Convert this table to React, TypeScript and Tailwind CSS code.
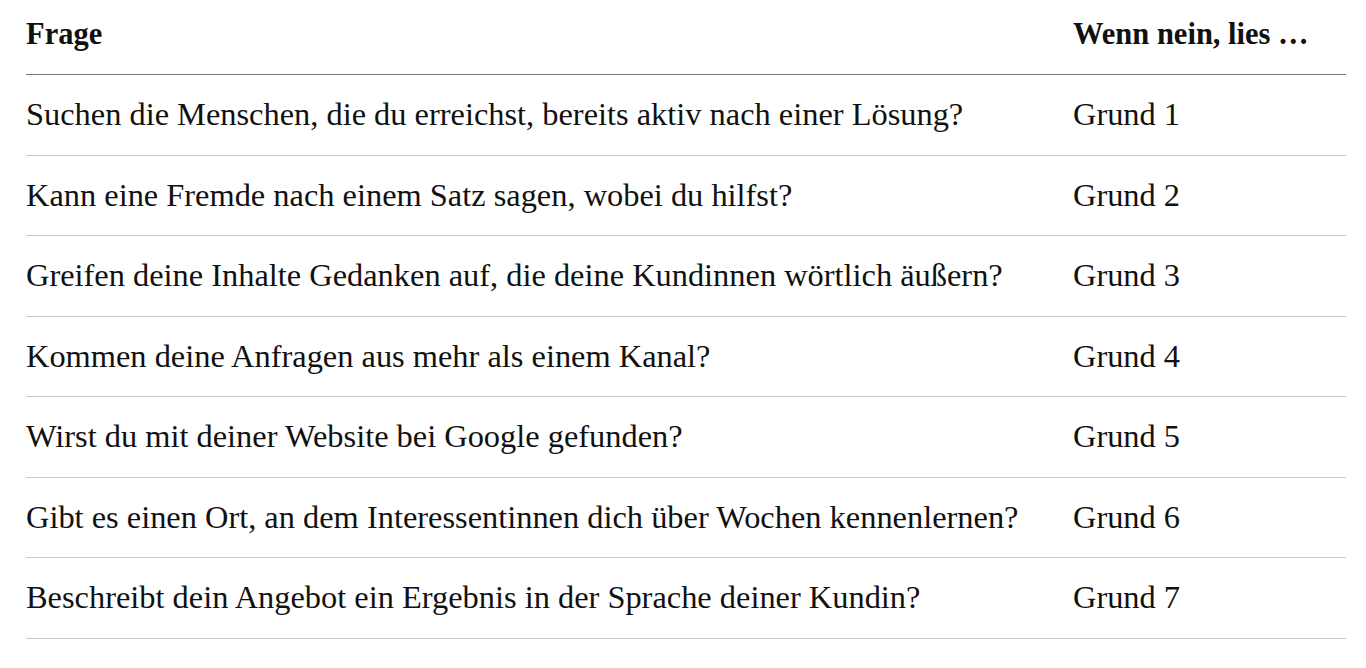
import React from "react";

const rows: [string, string][] = [
  ["Suchen die Menschen, die du erreichst, bereits aktiv nach einer Lösung?", "Grund 1"],
  ["Kann eine Fremde nach einem Satz sagen, wobei du hilfst?", "Grund 2"],
  ["Greifen deine Inhalte Gedanken auf, die deine Kundinnen wörtlich äußern?", "Grund 3"],
  ["Kommen deine Anfragen aus mehr als einem Kanal?", "Grund 4"],
  ["Wirst du mit deiner Website bei Google gefunden?", "Grund 5"],
  ["Gibt es einen Ort, an dem Interessentinnen dich über Wochen kennenlernen?", "Grund 6"],
  ["Beschreibt dein Angebot ein Ergebnis in der Sprache deiner Kundin?", "Grund 7"],
];

export default function App() {
  return (
    <div className="min-h-screen bg-white pl-[26px] pr-[20px] text-[#111] [font-family:'Liberation_Serif',serif]">
      <div className="grid grid-cols-[1047px_1fr] border-b border-[#777] h-[75px] pb-[5px] items-center text-[30.5px] font-bold">
        <div>Frage</div>
        <div>Wenn nein, lies …</div>
      </div>
      {rows.map(([q, g]) => (
        <div key={g} className="grid grid-cols-[1047px_1fr] border-b border-[#c8c8c8] h-[80.5px] items-center text-[32.4px]">
          <div className="whitespace-nowrap">{q}</div>
          <div>{g}</div>
        </div>
      ))}
    </div>
  );
}
